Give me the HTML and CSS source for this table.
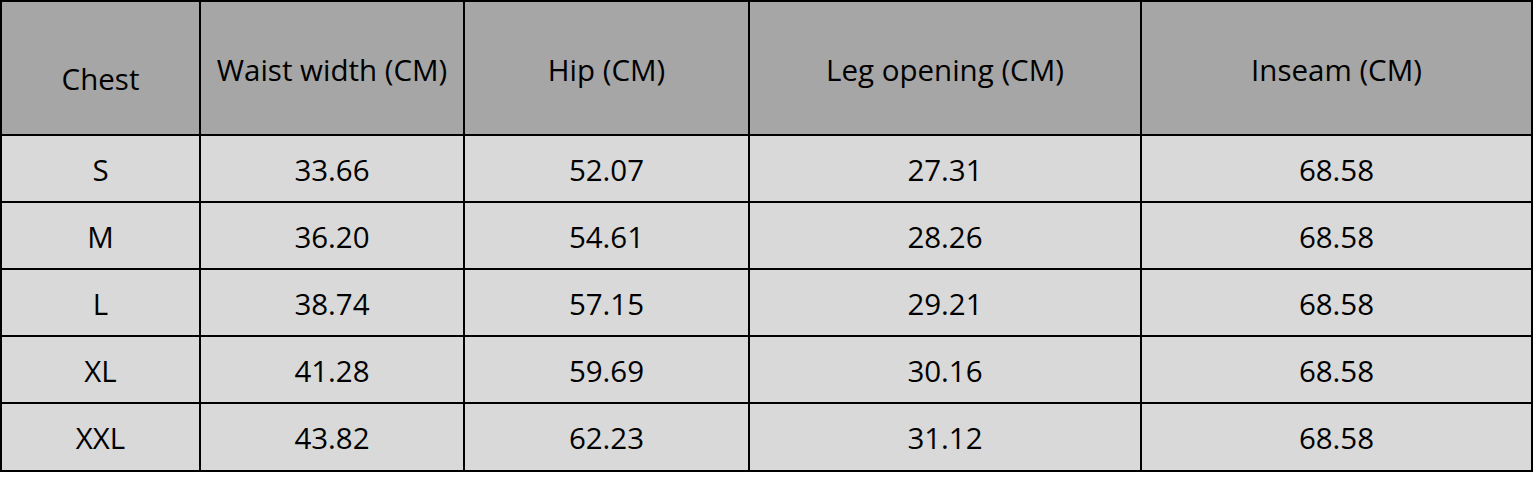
FILE: index.html
```html
<!DOCTYPE html>
<html lang="en">
<head>
<meta charset="utf-8">
<title>Size chart</title>
<link rel="stylesheet" href="styles.css">
</head>
<body>
<div class="chart">
  <div class="cell head chest">Chest</div>
  <div class="cell head">Waist width (CM)</div>
  <div class="cell head">Hip (CM)</div>
  <div class="cell head">Leg opening (CM)</div>
  <div class="cell head">Inseam (CM)</div>

  <div class="cell">S</div>
  <div class="cell">33.66</div>
  <div class="cell">52.07</div>
  <div class="cell">27.31</div>
  <div class="cell">68.58</div>

  <div class="cell">M</div>
  <div class="cell">36.20</div>
  <div class="cell">54.61</div>
  <div class="cell">28.26</div>
  <div class="cell">68.58</div>

  <div class="cell">L</div>
  <div class="cell">38.74</div>
  <div class="cell">57.15</div>
  <div class="cell">29.21</div>
  <div class="cell">68.58</div>

  <div class="cell">XL</div>
  <div class="cell">41.28</div>
  <div class="cell">59.69</div>
  <div class="cell">30.16</div>
  <div class="cell">68.58</div>

  <div class="cell">XXL</div>
  <div class="cell">43.82</div>
  <div class="cell">62.23</div>
  <div class="cell">31.12</div>
  <div class="cell">68.58</div>
</div>
</body>
</html>
```

FILE: styles.css
```css
html, body {
  margin: 0;
  padding: 0;
  background: #ffffff;
}

.chart {
  display: grid;
  grid-template-columns: 197px 262px 283px 390px 389px;
  grid-template-rows: 132px repeat(4, 65px) 66px;
  gap: 2px;
  padding: 2px;
  width: max-content;
  background: #000000;
  font-family: "Open Sans", "Liberation Sans", sans-serif;
  font-size: 29.5px;
  color: #000000;
}

.cell {
  display: flex;
  align-items: center;
  justify-content: center;
  background: #d9d9d9;
  line-height: 1;
  white-space: nowrap;
  padding-top: 2px;
}

.head {
  background: #a6a6a6;
  padding-top: 4px;
}

.head.chest {
  padding-top: 22px;
}
```
